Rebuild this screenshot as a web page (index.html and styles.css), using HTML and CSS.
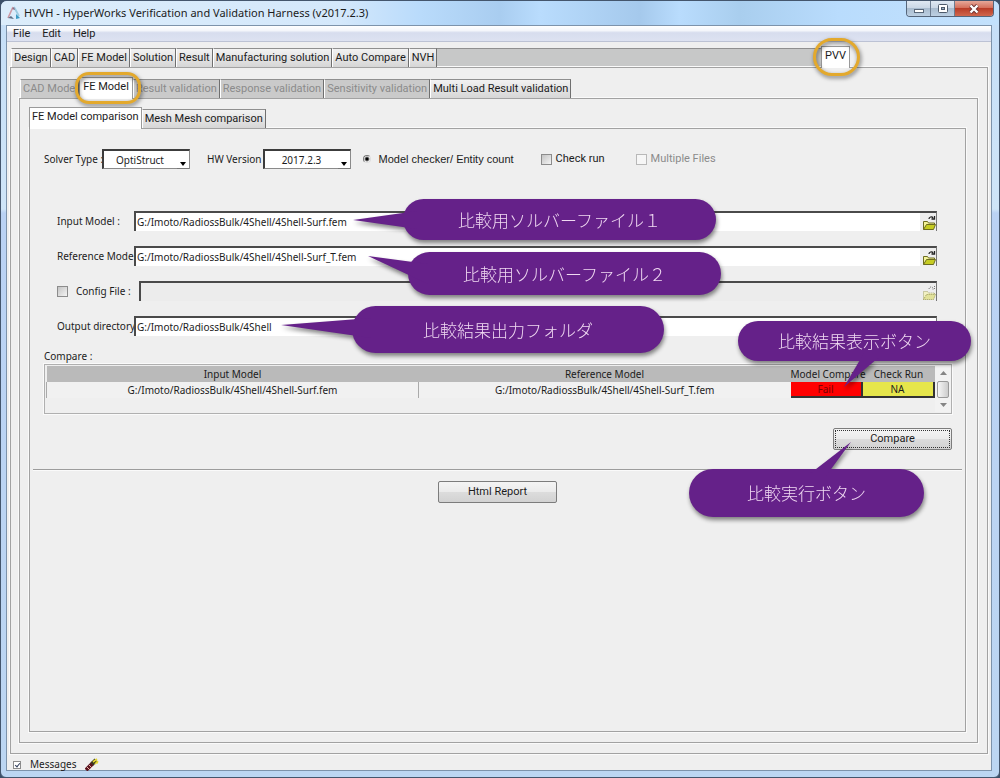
FILE: index.html
```html
<!DOCTYPE html>
<html lang="ja">
<head>
<meta charset="utf-8">
<title>HVVH - HyperWorks Verification and Validation Harness (v2017.2.3)</title>
<link rel="stylesheet" href="styles.css">
</head>
<body>
<div class="window">
  <header class="titlebar">
    <svg class="app-icon" width="14" height="14" viewBox="0 0 14 14" aria-hidden="true">
      <path d="M6 1L1 12" stroke="#cf9aa4" stroke-width="1.6" fill="none"/>
      <path d="M1 12L4 10l3 3z" fill="#5d6f86"/>
      <path d="M7 1l5 9" stroke="#9ccbe0" stroke-width="1.8" fill="none"/>
      <path d="M9 8l4 4-4 1z" fill="#3d9cc4"/>
      <path d="M5 3l2-2 1 3z" fill="#8a6f86"/>
    </svg>
    <h1 class="title">HVVH - HyperWorks Verification and Validation Harness (v2017.2.3)</h1>
    <div class="window-buttons">
      <button class="wb" type="button" aria-label="Minimize"><svg width="12" height="12" viewBox="0 0 12 12"><rect x="1.5" y="6.5" width="9" height="3" fill="#fff" stroke="#596779"/></svg></button>
      <button class="wb" type="button" aria-label="Maximize"><svg width="12" height="12" viewBox="0 0 12 12"><rect x="1.5" y="1.5" width="9" height="8" rx="1" fill="#fff" stroke="#4d5a6b"/><rect x="4.5" y="4.5" width="3" height="2" fill="#9fb0c4" stroke="#4d5a6b"/></svg></button>
      <button class="wb wb-close" type="button" aria-label="Close"><svg width="12" height="12" viewBox="0 0 12 12"><path d="M2.5 2.5l7 7M9.5 2.5l-7 7" stroke="#6b3030" stroke-width="4"/><path d="M2.5 2.5l7 7M9.5 2.5l-7 7" stroke="#fff" stroke-width="2.4"/></svg></button>
    </div>
  </header>

  <div class="client">
    <nav class="menubar">
      <button type="button">File</button>
      <button type="button">Edit</button>
      <button type="button">Help</button>
    </nav>

    <div class="level-1">
      <div class="tabs" role="tablist">
        <button class="tab" role="tab" type="button">Design</button>
        <button class="tab" role="tab" type="button">CAD</button>
        <button class="tab" role="tab" type="button">FE Model</button>
        <button class="tab" role="tab" type="button">Solution</button>
        <button class="tab" role="tab" type="button">Result</button>
        <button class="tab" role="tab" type="button">Manufacturing solution</button>
        <button class="tab" role="tab" type="button">Auto Compare</button>
        <button class="tab" role="tab" type="button">NVH</button>
        <span class="tab-filler"></span>
        <button class="tab tab-active tab-pvv" role="tab" type="button" aria-selected="true">PVV<span class="ring ring-pvv"></span></button>
      </div>
      <div class="frame frame-1">
        <div class="tabs" role="tablist">
          <button class="tab tab-off tab-cad" role="tab" type="button" disabled>CAD Model</button>
          <button class="tab tab-active tab-fe" role="tab" type="button" aria-selected="true">FE Model<span class="ring ring-fe"></span></button>
          <button class="tab tab-off" role="tab" type="button" disabled>Result validation</button>
          <button class="tab tab-off" role="tab" type="button" disabled>Response validation</button>
          <button class="tab tab-off" role="tab" type="button" disabled>Sensitivity validation</button>
          <button class="tab" role="tab" type="button">Multi Load Result validation</button>
        </div>
        <div class="frame frame-2">
          <div class="tabs tabs-inner" role="tablist">
            <button class="tab tab-active" role="tab" type="button" aria-selected="true">FE Model comparison</button>
            <button class="tab" role="tab" type="button">Mesh Mesh comparison</button>
          </div>
          <main class="frame frame-3">
            <div class="options">
              <label class="solver-label" for="solver">Solver Type :</label>
              <span class="combo"><select id="solver"><option>OptiStruct</option></select><span class="combo-arrow"></span></span>
              <label class="hw-label" for="hw">HW Version</label>
              <span class="combo"><select id="hw"><option>2017.2.3</option></select><span class="combo-arrow"></span></span>
              <label class="choice choice-radio"><input class="radio" type="radio" checked>Model checker/ Entity count</label>
              <label class="choice choice-run"><input class="box" type="checkbox">Check run</label>
              <label class="choice choice-off"><input class="box" type="checkbox" disabled>Multiple Files</label>
            </div>

            <div class="files">
              <div class="file-row">
                <label class="file-label" for="in">Input Model :</label>
                <span class="file"><input id="in" type="text" value="G:/Imoto/RadiossBulk/4Shell/4Shell-Surf.fem"><button class="browse" type="button" aria-label="Browse input model"><svg width="16" height="17" viewBox="0 0 16 17"><path d="M9 5c0-2 3-3 4-1M14.500 2v3h-3" fill="none" stroke="#222" stroke-width="1.3"/><path d="M3.500 15.500v-8h4l1 1.500h6v2" fill="#f4f39a" stroke="#6c6c20"/><path d="M3.500 15.500l3-5h9l-2 5z" fill="#c6cc22" stroke="#6c6c20"/></svg></button></span>
              </div>
              <div class="file-row">
                <label class="file-label" for="ref">Reference Model</label>
                <span class="file"><input id="ref" type="text" value="G:/Imoto/RadiossBulk/4Shell/4Shell-Surf_T.fem"><button class="browse" type="button" aria-label="Browse reference model"><svg width="16" height="17" viewBox="0 0 16 17"><path d="M9 5c0-2 3-3 4-1M14.500 2v3h-3" fill="none" stroke="#222" stroke-width="1.3"/><path d="M3.500 15.500v-8h4l1 1.500h6v2" fill="#f4f39a" stroke="#6c6c20"/><path d="M3.500 15.500l3-5h9l-2 5z" fill="#c6cc22" stroke="#6c6c20"/></svg></button></span>
              </div>
              <div class="file-row">
                <label class="file-label file-label-config"><input class="box" type="checkbox">Config File :</label>
                <span class="file file-off"><input type="text" aria-label="Config file path" disabled><button class="browse" type="button" aria-label="Browse config file" disabled><svg width="16" height="17" viewBox="0 0 16 17"><path d="M9 5c0-2 3-3 4-1M14.500 2v3h-3" fill="none" stroke="#777" stroke-dasharray="1 1"/><path d="M3.500 15.500v-8h4l1 1.500h6v2" fill="#f2f1c4" stroke="#a3a36c" stroke-dasharray="1 1"/><path d="M3.500 15.500l3-5h9l-2 5z" fill="#e2e29a" stroke="#9a9a55" stroke-dasharray="1 1"/></svg></button></span>
              </div>
              <div class="file-row">
                <label class="file-label" for="out">Output directory</label>
                <span class="file"><input id="out" type="text" value="G:/Imoto/RadiossBulk/4Shell"></span>
              </div>
            </div>

            <div class="compare-title">Compare :</div>
            <div class="compare-box">
              <table class="results">
                <thead>
                  <tr><th>Input Model</th><th>Reference Model</th><th class="narrow">Model Compare</th><th class="narrow">Check Run</th></tr>
                </thead>
                <tbody>
                  <tr><td>G:/Imoto/RadiossBulk/4Shell/4Shell-Surf.fem</td><td>G:/Imoto/RadiossBulk/4Shell/4Shell-Surf_T.fem</td><td class="cell-btn"><button class="state state-fail" type="button">Fail</button></td><td class="cell-btn"><button class="state state-na" type="button">NA</button></td></tr>
                </tbody>
              </table>
              <div class="scrollbar" aria-hidden="true">
                <svg width="7" height="4" viewBox="0 0 7 4"><path d="M0 4l3.500-4L7 4z" fill="#858585"/></svg>
                <span class="thumb"></span>
                <svg width="7" height="4" viewBox="0 0 7 4"><path d="M0 0l3.500 4L7 0z" fill="#858585"/></svg>
              </div>
            </div>
            <div class="run-row"><button class="push push-focus" type="button">Compare</button></div>
            <hr class="rule">
            <div class="report-row"><button class="push" type="button">Html Report</button></div>
          </main>
        </div>
      </div>
    </div>

    <footer class="statusbar">
      <label class="messages"><input class="box box-small" type="checkbox" checked>Messages</label>
      <svg width="14" height="13" viewBox="0 0 14 13" aria-hidden="true"><path d="M1 12l7-7" stroke="#5a1420" stroke-width="4"/><path d="M2 9l3 3M4 7l3 3" stroke="#e8b0a0" stroke-width="1"/><path d="M7 6l4-4" stroke="#3a3a20" stroke-width="4"/><path d="M8 4l4-3M10 6l3-3M13 5l-2-1" stroke="#e6d832" stroke-width="1.6"/></svg>
    </footer>
  </div>

  <div class="callout c1"><svg class="tail" width="64" height="20" viewBox="0 0 64 20"><path d="M0 9L64 0v18z"/></svg><p>比較用ソルバーファイル１</p></div>
  <div class="callout c2"><svg class="tail" width="60" height="30" viewBox="0 0 60 30"><path d="M0 0l60 8v20z"/></svg><p>比較用ソルバーファイル２</p></div>
  <div class="callout c3"><svg class="tail" width="90" height="24" viewBox="0 0 90 24"><path d="M0 7L90 0v20z"/></svg><p>比較結果出力フォルダ</p></div>
  <div class="callout c4"><svg class="tail" width="40" height="34" viewBox="0 0 40 34"><path d="M0 34L20 0h20z"/></svg><p>比較結果表示ボタン</p></div>
  <div class="callout c5"><svg class="tail" width="44" height="34" viewBox="0 0 44 34"><path d="M44 0L0 34h19z"/></svg><p>比較実行ボタン</p></div>
</div>
</body>
</html>
```
FILE: styles.css
```css
* { box-sizing: border-box; }

body {
  margin: 0;
  background: #3c5068;
  color: #1c1c1c;
  font: 11px/14px Roboto, "Liberation Sans", sans-serif;
}

button, input, select { font: inherit; color: inherit; }
button { margin: 0; padding: 0; border: 0; background: none; }

.window {
  position: relative;
  display: flex;
  flex-direction: column;
  min-height: 100vh;
  padding: 0 7px 6px 5px;
  border: 1px solid #44566d;
  border-radius: 7px 7px 6px 6px;
  background: linear-gradient(#c5def7 0, #cfe5f8 208px, #bad2f4 212px, #bcd6f2 100%);
}

.titlebar {
  display: flex;
  align-items: center;
  height: 24px;
  margin: 0 -7px 0 -5px;
  padding: 0 5px 0 6px;
  border-radius: 6px 6px 0 0;
  background: linear-gradient(90deg, #dcedfb 0, #d4e8fb 34%, #b9dbfb 42%, #a9cdf0 50%, #b9dcfd 54%, #a5c9ec 64%, #b9dcfd 68%, #a9ceee 74%, #b9dcfd 84%, #c3e1fc 100%);
}
.title { flex: 1; margin: 0 0 0 3px; font: 400 11px/14px "Noto Sans", sans-serif; }
.window-buttons {
  display: flex;
  align-self: flex-start;
  height: 16px;
  border: 1px solid #55657a;
  border-top: 0;
  border-radius: 0 0 4px 4px;
  overflow: hidden;
}
.wb {
  display: flex;
  align-items: center;
  justify-content: center;
  width: 24px;
  border-right: 1px solid #6c7c90;
  background: linear-gradient(#dfe8f2 0, #cbd8e6 45%, #a9bccf 50%, #bccfe2 100%);
}
.wb-close { width: 38px; border: 0; background: linear-gradient(#e6a899 0, #d4705c 45%, #b93d28 50%, #d0674d 100%); }

.client {
  display: flex;
  flex: 1;
  flex-direction: column;
  border: 1px solid #7d93ab;
  background: #efefef;
}
.menubar {
  display: flex;
  gap: 12px;
  height: 16px;
  padding-left: 6px;
  border-bottom: 1px solid #bcc2d4;
  background: linear-gradient(#fff 0, #f4f6fb 30%, #d7ddee 45%, #dde2f1 100%);
}

.level-1 { display: flex; flex: 1; flex-direction: column; padding: 4px 3px 0 3px; }

.tabs { display: flex; align-items: flex-end; height: 21px; padding-left: 1px; }
.tabs-inner { padding-left: 0; }
.tab {
  position: relative;
  height: 19px;
  padding: 0 2px;
  border: 1px solid #8f8f8f;
  border-bottom: 0;
  border-left-color: #fff;
  border-right: 1px solid #6f6f6f;
  background: linear-gradient(#f2f2f2, #d6d6d6);
  white-space: nowrap;
}
.tab-active {
  z-index: 1;
  height: 22px;
  margin-bottom: -1px;
  padding-bottom: 3px;
  border-color: #9a9a9a;
  background: #fff;
}
.tab-off { background: #cacaca; color: #8b8b8b; }
.tab-cad { width: 59px; text-align: left; overflow: hidden; }
.tab-fe { width: 54px; }
.tab-pvv { width: 29px; margin-right: 138px; }
.tab-filler { flex: 1; height: 19px; border-top: 1px solid #8f8f8f; background: #c7c8c8; }

.ring { position: absolute; border: 3px solid #e3a92d; border-radius: 20px; filter: drop-shadow(1px 2px 2px #0008); }
.ring-pvv { inset: -9px -11px -8px -9px; }
.ring-fe { inset: -6px -9px -5px -5px; border-radius: 14px; }

.frame {
  display: flex;
  flex: 1;
  flex-direction: column;
  border: 1px solid #a2a2a2;
  outline: 1px solid #fafafa;
}
.frame-1 { padding: 9px 9px 10px 8px; }
.frame-2 { padding: 8px 11px 10px 9px; }
.frame-3 { padding: 19px 3px 0; }

.options {
  display: flex;
  align-items: center;
  height: 22px;
  padding-left: 11px;
  font-family: "Noto Sans", sans-serif;
  font-size: 10px;
}
.combo { position: relative; display: flex; margin-left: 1px; }
.combo select {
  width: 88px;
  height: 20px;
  padding: 0 13px 0 0;
  appearance: none;
  border: 1px solid #8a8a8a;
  border-top: 2px solid #3c3c3c;
  border-left: 2px solid #3c3c3c;
  border-radius: 0;
  background: #fff;
  text-align: center;
  text-align-last: center;
}
.combo-arrow {
  position: absolute;
  right: 1px;
  bottom: 0;
  width: 12px;
  height: 9px;
  border-bottom: 1px solid #777;
  pointer-events: none;
}
.combo-arrow::after {
  content: "";
  position: absolute;
  left: 3px;
  bottom: 2px;
  border: 3px solid transparent;
  border-top: 4px solid #000;
  border-bottom: 0;
}
.solver-label { width: 57px; white-space: nowrap; }
.hw-label { margin-left: 17px; margin-right: 1px; }
.choice { display: flex; align-items: center; gap: 4px; font-size: 11px; }
.choice-radio { gap: 7px; margin-left: 12px; font-family: "Liberation Sans", sans-serif; }
.choice-run { margin-left: 27px; font-family: Roboto, sans-serif; }
.choice-off { margin-left: 31px; color: #8b8b8b; font-family: Roboto, sans-serif; }

.radio, .box { flex: none; margin: 0; appearance: none; }
.radio {
  width: 8px;
  height: 8px;
  border: 1px solid #777;
  border-color: #777 #ddd #ddd #777;
  border-radius: 50%;
  background: radial-gradient(circle, #000 0 1px, #fff 3px);
}
.box { width: 11px; height: 11px; border: 1px solid #8c8c8c; background: linear-gradient(135deg, #c4c4c4, #f4f4f4); }
.box:disabled { border-color: #b8b8b8; background: #f6f6f6; }
.box-small { position: relative; width: 8px; height: 8px; background: #fff; }
.box-small:checked::after {
  content: "";
  position: absolute;
  left: 2px;
  top: 0;
  width: 2px;
  height: 4px;
  border: solid #33415e;
  border-width: 0 1px 1px 0;
  transform: rotate(40deg);
}

.files {
  display: grid;
  gap: 15px;
  margin-top: 41px;
  padding: 0 25px 0 24px;
  font-family: "Noto Sans", sans-serif;
  font-size: 10px;
}
.file-row { display: flex; align-items: center; height: 20px; }
.file-label { flex: none; width: 77px; white-space: nowrap; }
.file-label-config { display: flex; align-items: center; gap: 8px; width: 82px; }
.file {
  position: relative;
  display: flex;
  flex: 1;
  height: 20px;
  border-top: 2px solid #4a4a4a;
  border-left: 2px solid #4a4a4a;
  border-right: 1px solid #777;
  background: #fff;
}
.file input { flex: 1; min-width: 0; padding: 0 1px; border: 0; background: none; }
.file-off { background: #ececec; }
.browse { width: 16px; height: 18px; background: #eee; }
.browse svg { display: block; }

.compare-title { margin: 13px 0 0 11px; font: 10px/14px "Noto Sans", sans-serif; }
.compare-box {
  display: flex;
  height: 50px;
  margin: 1px 10px 0 11px;
  padding: 1px 0 1px 1px;
  border: 1px solid #b0b0b0;
  outline: 1px solid #fafafa;
  font: 10px/14px "Noto Sans", sans-serif;
}
.results { flex: 1; width: 100%; height: 32px; border-collapse: collapse; table-layout: fixed; }
.results th { height: 16px; padding: 0; background: #bababa; font-weight: 400; white-space: nowrap; }
.results td { height: 16px; padding: 0; border-left: 1px solid #aaa; background: #f1f1f1; text-align: center; }
.results .narrow { width: 72px; }
.results .cell-btn { border: 0; }
.state { display: block; width: 100%; height: 16px; border-right: 2px solid #333; border-bottom: 2px solid #333; line-height: 13px; }
.state-fail { background: #f00; color: #7a0000; }
.state-na { background: #e6e64c; }
.scrollbar {
  display: flex;
  flex: none;
  flex-direction: column;
  align-items: center;
  justify-content: space-between;
  width: 16px;
  padding: 5px 0;
  background: #f2f2f2;
}
.thumb { width: 12px; height: 17px; border: 1px solid #999; border-radius: 2px; background: linear-gradient(90deg, #f6f6f6, #ccc); }

.run-row { display: flex; justify-content: flex-end; margin: 14px 10px 0; }
.push {
  width: 119px;
  height: 22px;
  border: 1px solid #7c7c7c;
  border-radius: 2px;
  background: linear-gradient(#f4f4f4 0, #ebebeb 48%, #dcdcdc 52%, #d2d2d2 100%);
}
.push-focus { outline: 1px dotted #333; outline-offset: -3px; }
.rule { width: 100%; margin: 19px 0 10px; border: 0; border-top: 1px solid #9c9c9c; border-bottom: 1px solid #fafafa; }
.report-row { display: flex; justify-content: center; }

.statusbar {
  display: flex;
  align-items: center;
  gap: 9px;
  height: 16px;
  padding: 5px 0 0 6px;
  font: 10px/11px "Noto Sans", sans-serif;
}
.messages { display: flex; align-items: center; gap: 9px; }

.callout {
  position: absolute;
  z-index: 5;
  display: flex;
  align-items: center;
  justify-content: center;
  border-radius: 24px;
  background: #652189;
  color: #f0d9f2;
  filter: drop-shadow(1px 3px 2px #0007);
  font: 300 17px/24px "Noto Sans CJK JP", sans-serif;
}
.callout p { margin: 0; white-space: nowrap; }
.tail { position: absolute; fill: #652189; }
.c1 { left: 402px; top: 198px; width: 313px; height: 41px; }
.c1 .tail { left: -50px; top: 12px; }
.c2 { left: 407px; top: 251px; width: 313px; height: 43px; }
.c2 .tail { left: -40px; top: 4px; }
.c3 { left: 351px; top: 305px; width: 312px; height: 47px; }
.c3 .tail { left: -71px; top: 12px; }
.c4 { left: 737px; top: 320px; width: 233px; height: 40px; }
.c4 .tail { left: 106px; top: 32px; }
.c5 { left: 688px; top: 468px; width: 235px; height: 48px; }
.c5 .tail { left: 118px; top: -27px; }
```
